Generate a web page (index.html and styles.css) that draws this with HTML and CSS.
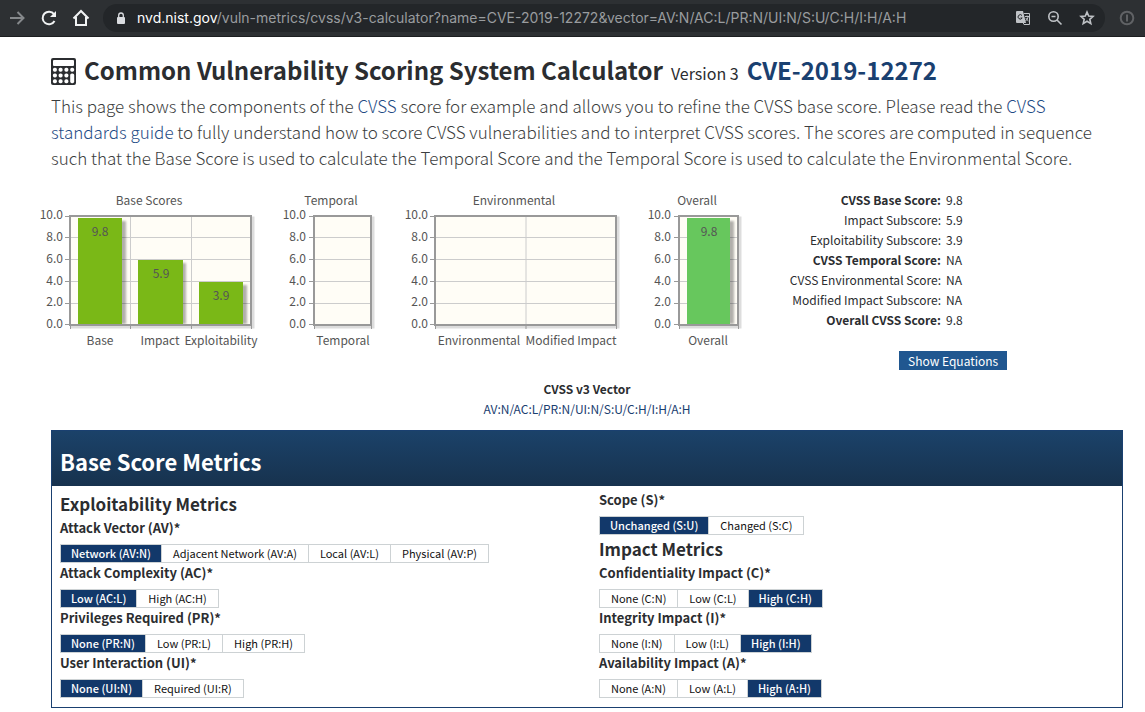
FILE: index.html
```html
<!DOCTYPE html>
<html lang="en">
<head>
<meta charset="utf-8">
<title>NVD - CVSS v3 Calculator</title>
<link rel="stylesheet" href="styles.css">
</head>
<body>
<header class="toolbar">
  <nav class="nav-buttons" aria-label="Browser">
    <button class="icon-button dim" aria-label="Forward"><svg width="18" height="18" viewBox="0 0 18 18"><path d="M2 9H15M9.500 3L15.500 9L9.500 15" /></svg></button>
    <button class="icon-button" aria-label="Reload"><svg width="18" height="18" viewBox="0 0 18 18"><path d="M14.500 12A6.300 6.300 0 1 1 14 5.200" /><path class="solid" d="M16 2V8H10Z" /></svg></button>
    <button class="icon-button" aria-label="Home"><svg width="18" height="18" viewBox="0 0 18 18"><path d="M1.500 9.500L9 2L16.500 9.500M4 8V16H14V8" /></svg></button>
  </nav>
  <div class="address">
    <svg class="lock" width="10" height="13" viewBox="0 0 10 13"><rect class="lock-body" x="1" y="5" width="8" height="7" rx="1" /><path d="M2.700 5V3.300A2.300 2.300 0 0 1 7.300 3.300V5" /></svg>
    <div class="url" role="textbox" aria-label="Address"><span class="host">nvd.nist.gov</span>/vuln-metrics/cvss/v3-calculator?name=CVE-2019-12272&amp;vector=AV:N/AC:L/PR:N/UI:N/S:U/C:H/I:H/A:H</div>
    <button class="icon-button soft" aria-label="Translate"><svg width="16" height="16" viewBox="0 0 16 16"><path class="solid" d="M2 1H8L11 13H2Q1 13 1 12V2Q1 1 2 1Z" /><path class="thin" d="M9 3.500H14.500V14.500H9L8 12.500M10 6.500H14M12 5.500V6.500M13.300 6.500Q12.500 9.500 10.500 11M10.800 8Q12 10 13.500 11" /><path class="cut" d="M7 5.500A2.200 2.200 0 1 0 7.200 8H5.500" /></svg></button>
    <button class="icon-button soft" aria-label="Zoom"><svg width="16" height="16" viewBox="0 0 16 16"><circle cx="6.500" cy="6.500" r="4.700" /><path d="M10 10L14.500 14.500M4.500 6.500H8.500" /></svg></button>
    <button class="icon-button soft" aria-label="Bookmark"><svg width="16" height="16" viewBox="0 0 16 16"><path class="star" d="M8 2L9.700 6L14 6.400L10.800 9.300L11.800 13.600L8 11.300L4.200 13.600L5.200 9.300L2 6.400L6.300 6Z" /></svg></button>
  </div>
  <button class="icon-button faint" aria-label="Password manager"><svg width="16" height="16" viewBox="0 0 16 16"><circle cx="8" cy="8" r="6.300" /><path d="M8 4.500V11.500" /></svg></button>
</header>

<main class="page">
  <h1 class="title">
    <svg class="calculator" width="25" height="27" viewBox="0 0 25 27"><rect class="case" x="0" y="0" width="25" height="27" rx="2" /><g class="key"><rect x="2" y="2" width="21" height="6" rx="1" /><rect x="1.900" y="9.700" width="4" height="4" rx="1.700" /><rect x="7.600" y="9.700" width="4" height="4" rx="1.700" /><rect x="13.400" y="9.700" width="4" height="4" rx="1.700" /><rect x="19.200" y="9.700" width="4" height="4" rx="1.700" /><rect x="1.900" y="15.400" width="4" height="4" rx="1.700" /><rect x="7.600" y="15.400" width="4" height="4" rx="1.700" /><rect x="13.400" y="15.400" width="4" height="4" rx="1.700" /><rect x="1.900" y="21.200" width="4" height="4" rx="1.700" /><rect x="7.600" y="21.200" width="4" height="4" rx="1.700" /><rect x="13.400" y="21.200" width="4" height="4" rx="1.700" /><rect x="19.200" y="15.400" width="4" height="9.800" rx="1.700" /></g></svg>
    <span>Common Vulnerability Scoring System Calculator</span>
    <small class="version">Version 3</small>
    <a class="cve" href="#cve">CVE-2019-12272</a>
  </h1>
  <p class="lead">This page shows the components of the <a href="#cvss">CVSS</a> score for example and allows you to refine the CVSS base score. Please read the <a href="#guide">CVSS standards guide</a> to fully understand how to score CVSS vulnerabilities and to interpret CVSS scores. The scores are computed in sequence such that the Base Score is used to calculate the Temporal Score and the Temporal Score is used to calculate the Environmental Score.</p>

  <section class="results">
    <svg class="chart" width="234" height="160" viewBox="31 190 234 160" role="img" aria-label="Base Scores">
      <rect class="frame-shadow" x="72" y="218" width="181" height="109" />
      <rect class="plot" x="70" y="216" width="181" height="109" />
      <path class="grid" d="M70 237.500H251M70 259.500H251M70 281.500H251M70 303.500H251M130.500 216V325M191.500 216V325" />
      <path class="ticks" d="M65 216.500H70M65 237.500H70M65 259.500H70M65 281.500H70M65 303.500H70M65 324.500H70M70.500 325V329M130.500 325V329M191.500 325V329M251.500 325V329" />
      <g class="bar-shadow"><rect x="81" y="221" width="45" height="103" /><rect x="141" y="263" width="45" height="61" /><rect x="202" y="285" width="45" height="39" /></g>
      <rect class="frame" x="70" y="216" width="181" height="109" />
      <g class="bars"><rect x="78" y="218" width="44" height="106" /><rect x="138" y="260" width="45" height="64" /><rect x="199" y="282" width="44" height="42" /></g>
      <g class="middle"><text x="149" y="205">Base Scores</text><text x="100" y="236">9.8</text><text x="161" y="278">5.9</text><text x="221" y="300">3.9</text><text x="100" y="345">Base</text><text x="160" y="345">Impact</text><text x="221" y="345">Exploitability</text></g>
      <g class="end"><text x="63" y="219">10.0</text><text x="63" y="241">8.0</text><text x="63" y="263">6.0</text><text x="63" y="285">4.0</text><text x="63" y="306">2.0</text><text x="63" y="328">0.0</text></g>
    </svg>
    <svg class="chart" width="112" height="160" viewBox="275 190 112 160" role="img" aria-label="Temporal">
      <rect class="frame-shadow" x="316" y="218" width="57" height="109" />
      <rect class="plot" x="314" y="216" width="57" height="109" />
      <path class="grid" d="M314 237.500H371M314 259.500H371M314 281.500H371M314 303.500H371" />
      <path class="ticks" d="M309 216.500H314M309 237.500H314M309 259.500H314M309 281.500H314M309 303.500H314M309 324.500H314M314.500 325V329M371.500 325V329" />
      <rect class="frame" x="314" y="216" width="57" height="109" />
      <g class="middle"><text x="331" y="205">Temporal</text><text x="343" y="345">Temporal</text></g>
      <g class="end"><text x="306" y="219">10.0</text><text x="306" y="241">8.0</text><text x="306" y="263">6.0</text><text x="306" y="285">4.0</text><text x="306" y="306">2.0</text><text x="306" y="328">0.0</text></g>
    </svg>
    <svg class="chart" width="234" height="160" viewBox="397 190 234 160" role="img" aria-label="Environmental">
      <rect class="frame-shadow" x="437" y="218" width="181" height="109" />
      <rect class="plot" x="435" y="216" width="181" height="109" />
      <path class="grid" d="M435 237.500H616M435 259.500H616M435 281.500H616M435 303.500H616M526 216V325" />
      <path class="ticks" d="M430 216.500H435M430 237.500H435M430 259.500H435M430 281.500H435M430 303.500H435M430 324.500H435M435.500 325V329M526 325V329M616.500 325V329" />
      <rect class="frame" x="435" y="216" width="181" height="109" />
      <g class="middle"><text x="514" y="205">Environmental</text><text x="479" y="345">Environmental</text><text x="571" y="345">Modified Impact</text></g>
      <g class="end"><text x="428" y="219">10.0</text><text x="428" y="241">8.0</text><text x="428" y="263">6.0</text><text x="428" y="285">4.0</text><text x="428" y="306">2.0</text><text x="428" y="328">0.0</text></g>
    </svg>
    <svg class="chart" width="112" height="160" viewBox="641 190 112 160" role="img" aria-label="Overall">
      <rect class="frame-shadow" x="681" y="218" width="59" height="109" />
      <rect class="plot" x="679" y="216" width="59" height="109" />
      <path class="grid" d="M679 237.500H738M679 259.500H738M679 281.500H738M679 303.500H738" />
      <path class="ticks" d="M674 216.500H679M674 237.500H679M674 259.500H679M674 281.500H679M674 303.500H679M674 324.500H679M679.500 325V329M738.500 325V329" />
      <rect class="bar-shadow" x="690" y="221" width="44" height="103" />
      <rect class="frame" x="679" y="216" width="59" height="109" />
      <rect class="overall-bar" x="687" y="218" width="43" height="106" />
      <g class="middle"><text x="697" y="205">Overall</text><text x="709" y="236">9.8</text><text x="708" y="345">Overall</text></g>
      <g class="end"><text x="671" y="219">10.0</text><text x="671" y="241">8.0</text><text x="671" y="263">6.0</text><text x="671" y="285">4.0</text><text x="671" y="306">2.0</text><text x="671" y="328">0.0</text></g>
    </svg>
    <div class="summary">
      <dl class="scores">
        <dt class="strong">CVSS Base Score:</dt><dd>9.8</dd>
        <dt>Impact Subscore:</dt><dd>5.9</dd>
        <dt>Exploitability Subscore:</dt><dd>3.9</dd>
        <dt class="strong">CVSS Temporal Score:</dt><dd>NA</dd>
        <dt>CVSS Environmental Score:</dt><dd>NA</dd>
        <dt>Modified Impact Subscore:</dt><dd>NA</dd>
        <dt class="strong">Overall CVSS Score:</dt><dd>9.8</dd>
      </dl>
      <button class="equations">Show Equations</button>
    </div>
  </section>

  <section class="vector">
    <strong>CVSS v3 Vector</strong>
    <a href="#vector">AV:N/AC:L/PR:N/UI:N/S:U/C:H/I:H/A:H</a>
  </section>

  <section class="panel">
    <h2 class="panel-title">Base Score Metrics</h2>
    <div class="columns">
      <div class="column">
        <h3 class="group-title">Exploitability Metrics</h3>
        <h4 class="metric">Attack Vector (AV)*</h4>
        <div class="options"><button class="option selected">Network (AV:N)</button><button class="option">Adjacent Network (AV:A)</button><button class="option">Local (AV:L)</button><button class="option">Physical (AV:P)</button></div>
        <h4 class="metric">Attack Complexity (AC)*</h4>
        <div class="options"><button class="option selected">Low (AC:L)</button><button class="option">High (AC:H)</button></div>
        <h4 class="metric">Privileges Required (PR)*</h4>
        <div class="options"><button class="option selected">None (PR:N)</button><button class="option">Low (PR:L)</button><button class="option">High (PR:H)</button></div>
        <h4 class="metric">User Interaction (UI)*</h4>
        <div class="options"><button class="option selected">None (UI:N)</button><button class="option">Required (UI:R)</button></div>
      </div>
      <div class="column">
        <h4 class="metric">Scope (S)*</h4>
        <div class="options"><button class="option selected">Unchanged (S:U)</button><button class="option">Changed (S:C)</button></div>
        <h3 class="group-title">Impact Metrics</h3>
        <h4 class="metric">Confidentiality Impact (C)*</h4>
        <div class="options"><button class="option">None (C:N)</button><button class="option">Low (C:L)</button><button class="option selected">High (C:H)</button></div>
        <h4 class="metric">Integrity Impact (I)*</h4>
        <div class="options"><button class="option">None (I:N)</button><button class="option">Low (I:L)</button><button class="option selected">High (I:H)</button></div>
        <h4 class="metric">Availability Impact (A)*</h4>
        <div class="options"><button class="option">None (A:N)</button><button class="option">Low (A:L)</button><button class="option selected">High (A:H)</button></div>
      </div>
    </div>
  </section>
</main>
</body>
</html>
```
FILE: styles.css
```css
* { box-sizing: border-box; }
body {
  margin: 0;
  background: #fff;
  color: #2b2d30;
  font: 12px/20px "Noto Sans CJK SC", "Open Sans", sans-serif;
}
h1, h2, h3, h4, p, dl, dd { margin: 0; }
button { font: inherit; }
a { color: #1a4070; text-decoration: none; }

.toolbar {
  display: flex;
  align-items: center;
  height: 37px;
  padding: 0 10px 0 8px;
  background: #2d3033;
  border-bottom: 1px solid #1c1e20;
}
.nav-buttons { display: flex; gap: 14px; margin-right: 13px; }
.icon-button {
  display: flex;
  padding: 0;
  border: 0;
  background: none;
  color: #f1f3f4;
}
.icon-button path, .icon-button circle { fill: none; stroke: currentColor; stroke-width: 2; }
.icon-button .solid { fill: currentColor; stroke: none; }
.icon-button .thin { stroke-width: 1; }
.icon-button .cut { stroke: #232629; stroke-width: 1; }
.dim { color: #85888b; }
.soft { color: #bfc2c6; }
.soft path, .soft circle { stroke-width: 1.600; }
.faint { color: #606265; }
.address {
  display: flex;
  flex: 1;
  align-items: center;
  gap: 16px;
  height: 28px;
  margin-right: 14px;
  padding: 0 10px 0 13px;
  border-radius: 14px;
  background: #232629;
}
.lock { margin-right: -5px; }
.lock-body { fill: #dadce0; }
.lock path { fill: none; stroke: #dadce0; stroke-width: 1.300; }
.url { flex: 1; overflow: hidden; color: #999c9f; font: 14px/20px Inter, sans-serif; white-space: nowrap; }
.host { color: #fff; }

.page { padding: 14px 22px 4px 51px; }
.title { display: flex; align-items: baseline; gap: 8px; font-size: 24px; line-height: 38px; white-space: nowrap; }
.calculator { align-self: center; }
.case { fill: #2b2d30; }
.key { fill: #fff; }
.version { font-size: 16px; font-weight: 400; }
.cve { color: #1a4070; }
.lead { margin-top: 1px; color: #3c3e40; font-size: 17px; font-weight: 300; line-height: 26px; }
.lead a { color: #1f4c85; }

.results { display: flex; gap: 10px; margin: 19px 0 0 -20px; }
.chart { flex: none; overflow: visible; fill: #555; font-size: 12px; }
.middle { text-anchor: middle; }
.end { text-anchor: end; }
.plot { fill: #fffdf6; }
.frame { fill: none; stroke: #999; stroke-width: 2; }
.frame-shadow { fill: none; stroke: #ddd; stroke-width: 3; }
.grid { fill: none; stroke: #ccc; }
.ticks { fill: none; stroke: #999; }
.bars { fill: #7ab817; }
.overall-bar { fill: #67c75d; }
.bar-shadow { fill: #000; opacity: .3; filter: blur(1px); }
.summary { flex: 1; }
.scores { display: grid; grid-template-columns: 178px auto; column-gap: 5px; }
.scores dt { text-align: right; }
.strong { font-weight: 700; }
.equations {
  display: block;
  margin: 21px 0 0 136px;
  padding: 0 9px;
  border: 0;
  background: #205790;
  color: #fff;
  line-height: 19px;
}
.vector { display: flex; flex-direction: column; align-items: center; margin-top: 9px; }

.panel { margin-top: 11px; border: 1px solid #1a4070; }
.panel-title {
  padding: 12px 8px 7px;
  background: linear-gradient(#1b4269, #17324e);
  color: #fff;
  font-size: 22px;
  line-height: 36px;
}
.columns { display: grid; grid-template-columns: 1fr 1fr; gap: 24px; padding: 4px 8px 9px; }
.group-title { font-size: 17px; line-height: 28px; }
.metric { padding-bottom: 6px; font-size: 13px; line-height: 20px; }
.options { display: flex; height: 19px; }
.option {
  padding: 0 11px;
  border: 1px solid #cdd2d4;
  background: #fff;
  color: #111;
  font-size: 11px;
  line-height: 17px;
}
.option + .option { border-left: 0; }
.selected { padding: 0 10px; background: #12386a; color: #fff; font-weight: 500; }
```
